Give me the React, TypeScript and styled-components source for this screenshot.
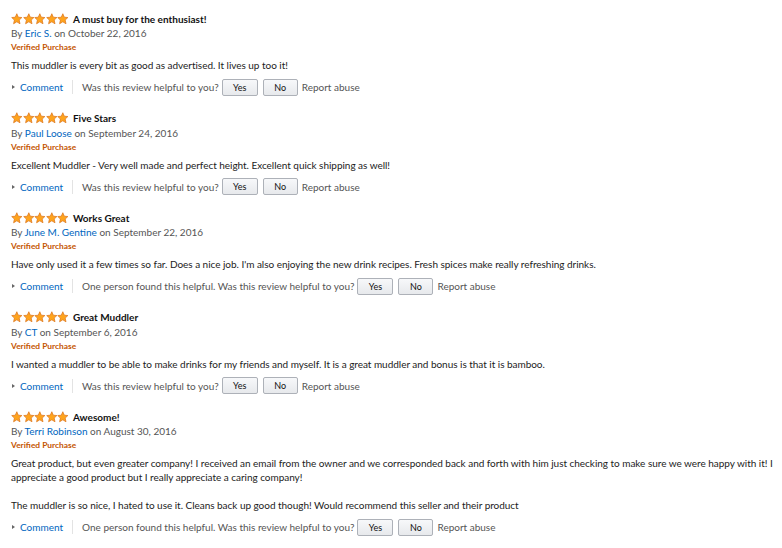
import React from "react";
import styled, { createGlobalStyle } from "styled-components";

const Global = createGlobalStyle`
  html, body { margin: 0; padding: 0; background: #fff; }
  body { font-family: Lato, "Open Sans", Arial, sans-serif; color: #333; }
`;

const Page = styled.div`
  width: 782px;
  height: 548px;
  overflow: hidden;
  box-sizing: border-box;
  padding: 11px 0 0 11px;
  background: #fff;
`;

const Review = styled.div`
  display: flex;
  flex-direction: column;
  margin-bottom: 14.5px;
`;

const TitleRow = styled.div`
  display: flex;
  align-items: center;
  height: 15px;
  gap: 4px;
`;

const Stars = styled.div`
  display: flex;
`;

const Title = styled.span`
  font-size: 10px;
  font-weight: 700;
  color: #111;
`;

const ByLine = styled.div`
  height: 14px;
  line-height: 14px;
  font-size: 10px;
  color: #555;
`;

const Link = styled.span`
  color: #0066c0;
`;

const Verified = styled.div`
  height: 14px;
  line-height: 14px;
  font-size: 8.4px;
  font-weight: 700;
  color: #c45500;
`;

const Body = styled.div`
  margin-top: 4px;
  font-size: 10px;
  line-height: 14px;
  color: #222;
  white-space: pre-wrap;
  width: 770px;
  letter-spacing: -0.03px;
`;

const Actions = styled.div`
  margin-top: 6px;
  height: 18px;
  display: flex;
  align-items: center;
  font-size: 10px;
  color: #555;
`;

const Caret = styled.span`
  width: 0;
  height: 0;
  margin: 0 5px 0 1px;
  border-top: 2.5px solid transparent;
  border-bottom: 2.5px solid transparent;
  border-left: 3px solid #666;
`;

const Sep = styled.span`
  width: 1px;
  height: 14px;
  background: #e3e3e3;
  margin: 0 9px 0 9px;
`;

const Btn = styled.span<{ $w: number; $ml: number }>`
  box-sizing: border-box;
  display: inline-flex;
  align-items: center;
  justify-content: center;
  width: ${(p) => p.$w}px;
  height: 17px;
  margin-left: ${(p) => p.$ml}px;
  border: 1px solid #adb1b8;
  border-radius: 2px;
  background: linear-gradient(#f7f8fa, #e7e9ec);
  font-size: 9px;
  color: #111;
`;

const Report = styled.span`
  margin-left: 4px;
`;

const Star = () => (
  <svg width="11.6" height="12" viewBox="0 0 24 24" preserveAspectRatio="none">
    <path
      d="M12 1.5l3.1 6.9 7.4.7-5.6 5 1.7 7.4L12 17.6l-6.6 3.9 1.7-7.4-5.6-5 7.4-.7z"
      fill="#ffa41c"
      stroke="#de7921"
      strokeWidth="1.6"
      strokeLinejoin="round"
    />
  </svg>
);

type R = { title: string; by: string; date: string; body: string; helpful?: boolean };

const reviews: R[] = [
  {
    title: "A must buy for the enthusiast!",
    by: "Eric S.",
    date: "October 22, 2016",
    body: "This muddler is every bit as good as advertised. It lives up too it!",
  },
  {
    title: "Five Stars",
    by: "Paul Loose",
    date: "September 24, 2016",
    body: "Excellent Muddler - Very well made and perfect height. Excellent quick shipping as well!",
  },
  {
    title: "Works Great",
    by: "June M. Gentine",
    date: "September 22, 2016",
    body: "Have only used it a few times so far. Does a nice job. I'm also enjoying the new drink recipes. Fresh spices make really refreshing drinks.",
    helpful: true,
  },
  {
    title: "Great Muddler",
    by: "CT",
    date: "September 6, 2016",
    body: "I wanted a muddler to be able to make drinks for my friends and myself. It is a great muddler and bonus is that it is bamboo.",
  },
  {
    title: "Awesome!",
    by: "Terri Robinson",
    date: "August 30, 2016",
    body: "Great product, but even greater company! I received an email from the owner and we corresponded back and forth with him just checking to make sure we were happy with it! I appreciate a good product but I really appreciate a caring company!\n\nThe muddler is so nice, I hated to use it. Cleans back up good though! Would recommend this seller and their product",
    helpful: true,
  },
];

export default function App() {
  return (
    <Page>
      <Global />
      {reviews.map((r) => (
        <Review key={r.title}>
          <TitleRow>
            <Stars>
              {[0, 1, 2, 3, 4].map((i) => (
                <Star key={i} />
              ))}
            </Stars>
            <Title>{r.title}</Title>
          </TitleRow>
          <ByLine>
            By <Link>{r.by}</Link> on {r.date}
          </ByLine>
          <Verified>Verified Purchase</Verified>
          <Body>{r.body}</Body>
          <Actions>
            <Caret />
            <Link>Comment</Link>
            <Sep />
            {r.helpful
              ? "One person found this helpful. Was this review helpful to you?"
              : "Was this review helpful to you?"}
            <Btn $w={36} $ml={3}>Yes</Btn>
            <Btn $w={35} $ml={5}>No</Btn>
            <Report>Report abuse</Report>
          </Actions>
        </Review>
      ))}
    </Page>
  );
}
